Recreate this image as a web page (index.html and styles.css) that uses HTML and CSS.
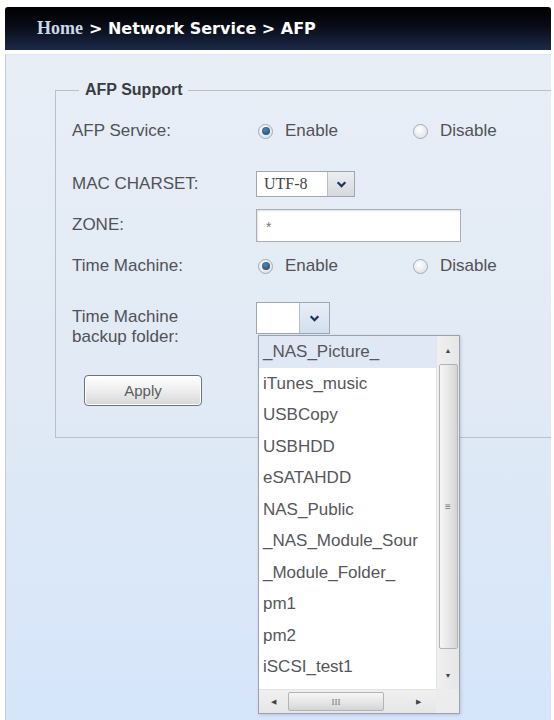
FILE: index.html
```html
<!DOCTYPE html>
<html lang="en">
<head>
  <meta charset="UTF-8" />
  <title>AFP</title>
  <link rel="stylesheet" href="styles.css">
</head>
<body>
  <div class="frame">
    <div class="crumb">
      <span class="home">Home</span>
      <span class="path">&gt; Network Service &gt; AFP</span>
    </div>

    <div class="panel">
      <fieldset class="box">
        <legend>AFP Support</legend>

        <div class="row r-service">
          <span class="label">AFP Service:</span>
          <div class="radios">
            <span class="radio"><i class="dot on"></i>Enable</span>
            <span class="radio"><i class="dot"></i>Disable</span>
          </div>
        </div>

        <div class="row r-charset">
          <span class="label">MAC CHARSET:</span>
          <div class="select charset">
            <span class="value">UTF-8</span>
            <span class="arrow grey">
              <svg viewBox="0 0 10 8" aria-hidden="true"><path d="M1.5 2 L5 5.5 L8.5 2" /></svg>
            </span>
          </div>
        </div>

        <div class="row r-zone">
          <span class="label">ZONE:</span>
          <div class="input">*</div>
        </div>

        <div class="row r-tm">
          <span class="label">Time Machine:</span>
          <div class="radios">
            <span class="radio"><i class="dot on"></i>Enable</span>
            <span class="radio"><i class="dot"></i>Disable</span>
          </div>
        </div>

        <div class="row r-folder">
          <span class="label">Time Machine<br>backup folder:</span>
          <div class="folder">
            <div class="select small">
              <span class="value"></span>
              <span class="arrow">
                <svg viewBox="0 0 10 8" aria-hidden="true"><path d="M1.5 2 L5 5.5 L8.5 2" /></svg>
              </span>
            </div>

            <div class="list">
              <ul class="items">
                <li class="sel">_NAS_Picture_</li>
                <li>iTunes_music</li>
                <li>USBCopy</li>
                <li>USBHDD</li>
                <li>eSATAHDD</li>
                <li>NAS_Public</li>
                <li>_NAS_Module_Sour</li>
                <li>_Module_Folder_</li>
                <li>pm1</li>
                <li>pm2</li>
                <li>iSCSI_test1</li>
              </ul>
              <div class="vbar">
                <span class="btn-arrow">&#9650;</span>
                <span class="vthumb">&#8801;</span>
                <span class="btn-arrow">&#9660;</span>
              </div>
              <div class="hbar">
                <span class="btn-arrow">&#9664;</span>
                <span class="hthumb">III</span>
                <span class="btn-arrow">&#9654;</span>
              </div>
              <div class="corner"></div>
            </div>
          </div>
        </div>

        <button class="apply">Apply</button>
      </fieldset>
    </div>
  </div>
</body>
</html>
```

FILE: styles.css
```css
* {
  box-sizing: border-box;
}

body {
  margin: 0;
  background: #fff;
  font-family: "Liberation Sans", Arial, sans-serif;
  color: #505256;
}

.frame {
  height: 720px;
  padding: 7px 3px 0 5px;
  overflow: hidden;
}

/* breadcrumb bar */
.crumb {
  height: 43px;
  display: flex;
  align-items: center;
  gap: 6px;
  padding-left: 32px;
  border-radius: 3px 3px 0 0;
  background: linear-gradient(180deg, #000 0%, #080c16 45%, #1c2948 100%);
  color: #fff;
}
.crumb .home {
  font-family: "Liberation Serif", "Times New Roman", serif;
  font-weight: bold;
  font-size: 18px;
  color: #c9d9ea;
}
.crumb .path {
  font-family: "DejaVu Sans", Verdana, sans-serif;
  font-weight: bold;
  font-size: 16px;
}

/* content panel */
.panel {
  margin-top: 4px;
  height: 666px;
  border-left: 1px solid #c6ccd4;
  border-top: 1px solid #dfe5ec;
  background: linear-gradient(180deg, #e8eef6 0%, #e1eaf5 50%, #d5e5fa 100%);
  padding-left: 49px;
  overflow: hidden;
}

.box {
  margin: 26px -20px 0 0;
  padding: 15px 0 31px 16px;
  border: 1px solid #b9c0c8;
  border-right: none;
}
.box legend {
  margin-left: 7px;
  padding: 0 6px;
  font-weight: bold;
  font-size: 16px;
  color: #3a3c40;
}

.row {
  display: grid;
  grid-template-columns: 184px 1fr;
  align-items: center;
  height: 34px;
  font-size: 17px;
}
.r-service { margin-bottom: 19px; }
.r-charset { margin-bottom: 7px; }
.r-zone { margin-bottom: 7px; }
.r-tm { margin-bottom: 19px; }
.r-folder {
  align-items: start;
  height: 45px;
}
.r-folder .label {
  padding-top: 5px;
  line-height: 20px;
}

/* radios */
.radios {
  display: grid;
  grid-template-columns: 155px auto;
  padding-left: 2px;
}
.radio {
  display: flex;
  align-items: center;
  gap: 12px;
}
.dot {
  width: 15px;
  height: 15px;
  border-radius: 50%;
  border: 1px solid #a4abb3;
  background: radial-gradient(circle at 40% 35%, #fff 0%, #e3e6ea 70%, #cfd4da 100%);
  display: flex;
  align-items: center;
  justify-content: center;
}
.dot.on::after {
  content: "";
  width: 8px;
  height: 8px;
  border-radius: 50%;
  background: radial-gradient(circle at 40% 35%, #4f86b3 0%, #1f4466 100%);
}

/* selects */
.select {
  display: flex;
  border: 1px solid #9ea6ae;
  background: #fff;
}
.select .value {
  font-family: "Liberation Serif", "Times New Roman", serif;
  font-size: 16px;
  color: #444;
  padding: 3px 0 0 7px;
}
.select .arrow {
  display: flex;
  align-items: center;
  justify-content: center;
  border-left: 1px solid #b8c0c8;
  background: linear-gradient(180deg, #e8eef6 0%, #d2dfef 100%);
}
.select .arrow.grey {
  background: linear-gradient(180deg, #eceef0 0%, #d6d9dd 100%);
}
.select svg {
  width: 11px;
  height: 9px;
  fill: none;
  stroke: #1d3660;
  stroke-width: 2;
}
.charset {
  width: 99px;
  height: 26px;
}
.charset .value { width: 70px; }
.charset .arrow { flex: 1; }

.input {
  width: 205px;
  height: 33px;
  border: 1px solid #a6aeb6;
  box-shadow: inset 1px 1px 2px rgba(0, 0, 0, 0.12);
  background: #fff;
  padding: 9px 0 0 9px;
  font-size: 14px;
  color: #777;
}

.folder {
  position: relative;
}
.small {
  width: 74px;
  height: 32px;
}
.small .value { width: 42px; }
.small .arrow { flex: 1; }

/* open dropdown list */
.list {
  position: absolute;
  left: 2px;
  top: 33px;
  width: 202px;
  height: 379px;
  border: 1px solid #9aa3ad;
  background: #fff;
  box-shadow: 1px 1px 3px rgba(0, 0, 0, 0.15);
  display: grid;
  grid-template-columns: 1fr 23px;
  grid-template-rows: 1fr 24px;
}
.items {
  list-style: none;
  margin: 0;
  padding: 0;
  overflow: hidden;
  white-space: nowrap;
  font-size: 17px;
  color: #55575b;
}
.items li {
  height: 31.5px;
  line-height: 31.5px;
  padding-left: 4px;
}
.items li.sel {
  background: #dfe8f4;
}

.vbar {
  display: flex;
  flex-direction: column;
  align-items: center;
  background: linear-gradient(90deg, #f0f0f0, #e6e6e6);
  border-left: 1px solid #e2e2e2;
}
.btn-arrow {
  font-size: 7px;
  color: #444;
  height: 28px;
  display: flex;
  align-items: center;
  justify-content: center;
}
.vthumb {
  flex: 1;
  width: 19px;
  margin-bottom: 12px;
  border: 1px solid #b0b4b8;
  border-radius: 2px;
  background: linear-gradient(90deg, #f6f6f6 0%, #e4e4e4 60%, #d4d4d4 100%);
  display: flex;
  align-items: center;
  justify-content: center;
  font-size: 10px;
  color: #777;
}

.hbar {
  display: flex;
  align-items: center;
  padding-left: 8px;
  background: linear-gradient(180deg, #f0f0f0, #e6e6e6);
  border-top: 1px solid #e2e2e2;
}
.hbar .btn-arrow {
  width: 12px;
  height: 22px;
}
.hthumb {
  width: 96px;
  height: 19px;
  margin: 0 28px 0 9px;
  border: 1px solid #b0b4b8;
  border-radius: 2px;
  background: linear-gradient(180deg, #f6f6f6 0%, #e4e4e4 60%, #d4d4d4 100%);
  display: flex;
  align-items: center;
  justify-content: center;
  font-family: "Liberation Serif", serif;
  font-size: 9px;
  color: #777;
}
.corner {
  background: #ececec;
}

.apply {
  display: block;
  margin: 28px 0 0 12px;
  width: 118px;
  height: 31px;
  border: 1px solid #6c737b;
  border-radius: 4px;
  background: linear-gradient(180deg, #ffffff 0%, #eeeeee 50%, #d6d7d9 100%);
  box-shadow: inset 0 0 0 1px #fff;
  font-family: "Liberation Sans", Arial, sans-serif;
  font-size: 15px;
  color: #5a5c60;
}
```
